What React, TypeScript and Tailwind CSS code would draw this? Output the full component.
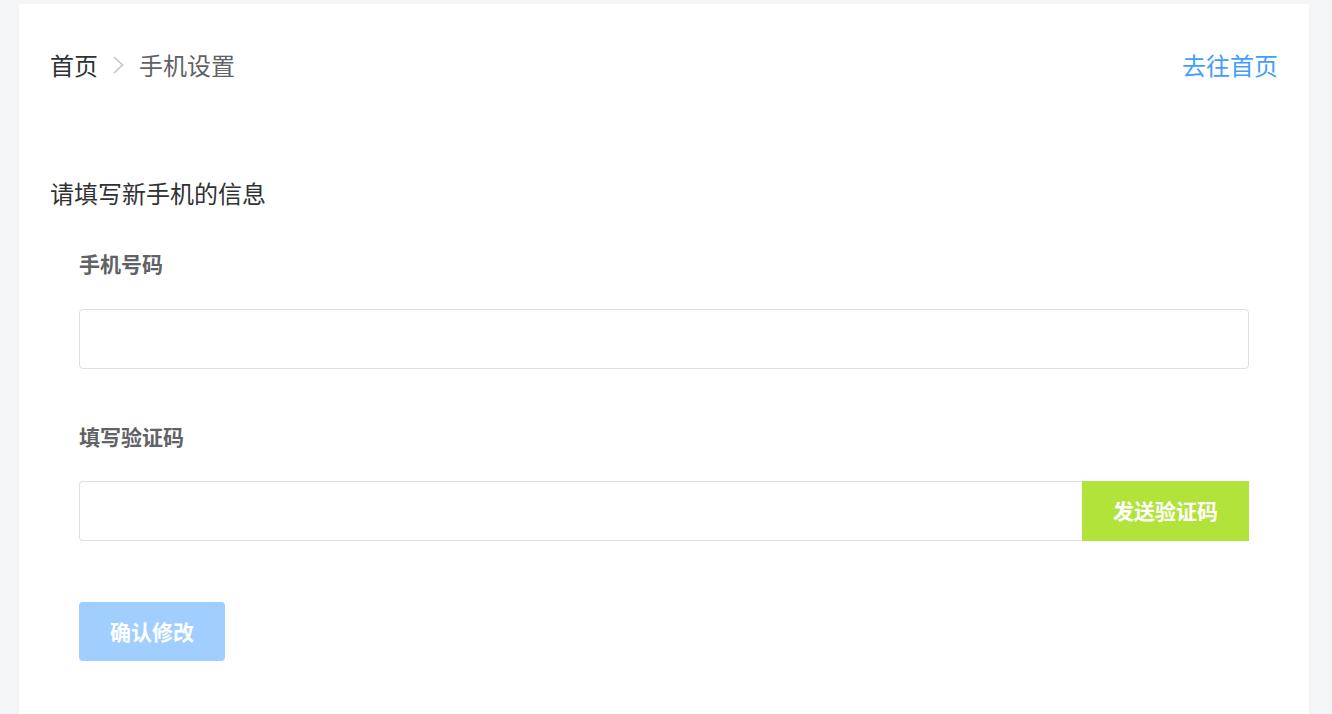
export default function App() {
  return (
    <div
      className="min-h-[714px] bg-[#f4f5f7] pt-[4px] pl-[19px]"
      style={{ fontFamily: '"Noto Sans CJK SC", "Noto Sans", sans-serif' }}
    >
      <div className="w-[1290px] min-h-[710px] bg-white pl-[31px] pr-[31px] pt-[43px]">
        {/* breadcrumb */}
        <div className="flex h-[36px] items-center justify-between">
          <div className="flex items-center text-[24px] leading-[36px]">
            <span className="text-[#303133]">首页</span>
            <svg className="mx-[14px]" width="13" height="20" viewBox="0 0 13 20" fill="none">
              <path d="M2 2 L10.5 10 L2 18" stroke="#c0c4cc" strokeWidth="1.6" />
            </svg>
            <span className="text-[#606266]">手机设置</span>
          </div>
          <a className="cursor-pointer text-[24px] leading-[36px] text-[#409eff]">去往首页</a>
        </div>

        <div className="mt-[92px] text-[24px] leading-[36px] text-[#303133]">请填写新手机的信息</div>

        <div className="ml-[29px] mr-[29px]">
          <div className="mt-[36px] text-[21px] font-bold leading-[32px] text-[#606266]">手机号码</div>
          <input
            className="mt-[30px] block h-[60px] w-full rounded-[4px] border border-[#dcdfe6] px-[15px] text-[18px] outline-none"
            type="text"
          />

          <div className="mt-[51px] text-[21px] font-bold leading-[32px] text-[#606266]">填写验证码</div>
          <div className="mt-[29px] flex h-[60px] w-full">
            <input
              className="h-full min-w-0 flex-1 rounded-l-[4px] border border-r-0 border-[#dcdfe6] px-[15px] text-[18px] outline-none"
              type="text"
            />
            <button className="flex h-full w-[167px] items-center justify-center bg-[#b1e33a] text-[21px] font-bold text-white">
              发送验证码
            </button>
          </div>

          <button className="mt-[61px] flex h-[59px] w-[146px] items-center justify-center rounded-[4px] bg-[#a0cfff] text-[21px] font-bold text-white">
            确认修改
          </button>
        </div>
      </div>
    </div>
  );
}
